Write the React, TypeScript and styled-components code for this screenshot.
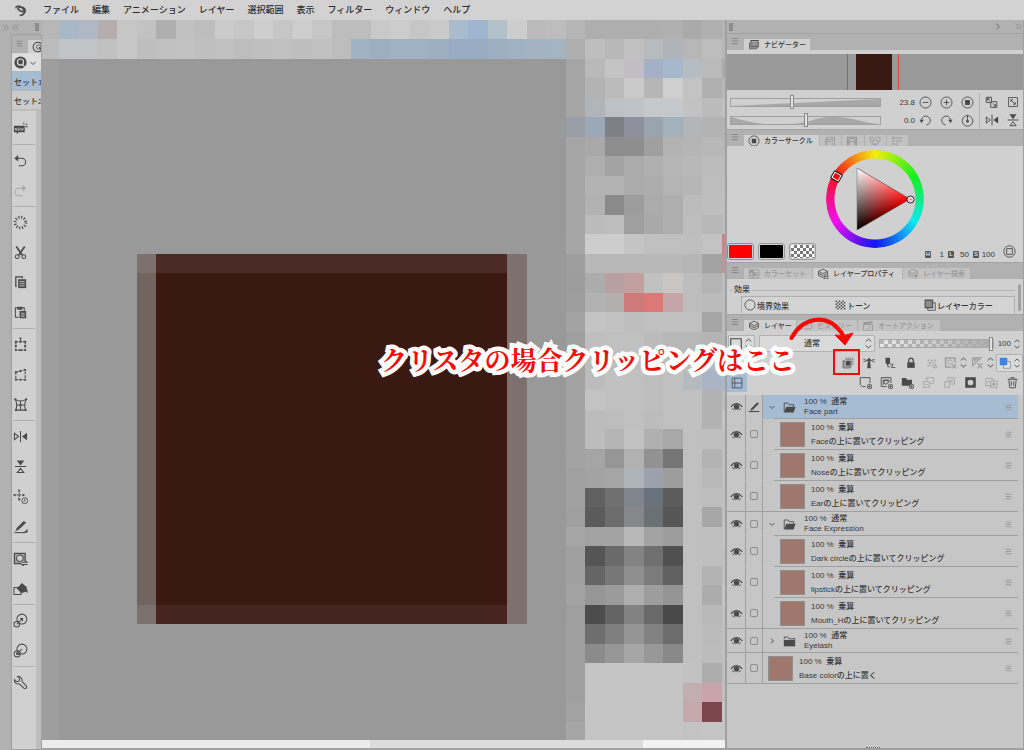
import React from "react";
import styled, { createGlobalStyle, css } from "styled-components";

const c = {
  bar: "#b1b1b1",
  panel: "#d0d0d0",
  list: "#c6c6c6",
  line: "#a0a0a0",
  soft: "#bababa",
  ink: "#383838",
  faint: "#989898",
  blue: "#a6bcd3",
  red: "#f40b06",
};

const Global = createGlobalStyle`
  *, *::before, *::after { box-sizing: border-box; }
  body { margin: 0; background: ${c.bar}; }
  body, button, input, select {
    font-family: "Liberation Sans", "Noto Sans CJK JP", sans-serif;
    font-size: 8px;
    font-weight: 500;
    color: ${c.ink};
  }
  button { padding: 0; border: 0; background: none; }
  ul, fieldset, legend { margin: 0; padding: 0; border: 0; list-style: none; }
  svg { display: block; flex: none; }
`;

/* ---------- icons ---------- */

const Svg = styled.svg<{ $size: number; $color?: string }>`
  width: ${(p) => p.$size}px;
  height: ${(p) => p.$size}px;
  color: ${(p) => p.$color || "#4a4a4a"};
  fill: none;
  stroke: currentColor;
  stroke-width: 1.1;
`;

const F = { fill: "currentColor", stroke: "none" };

const stackLayers = (
  <>
    <path d="M8 1.5 14 4.500 8 7.500 2 4.500Z" />
    <path d="M2 7.200 8 10.200 14 7.200M2 9.900 8 12.900 14 9.900M2 4.500V9.900M14 4.500V9.900" />
  </>
);

const glyphs: Record<string, React.ReactNode> = {
  menu: <path d="M3 4H13M3 8H13M3 12H13" strokeWidth="1.600" />,
  downSmall: <path d="M3 6 8 11 13 6" strokeWidth="1.8" />,
  rightSmall: <path d="M6 3 11 8 6 13" strokeWidth="1.8" />,
  right2: <path d="M3 3 8 8 3 13M8 3 13 8 8 13" />,
  left2: <path d="M8 3 3 8 8 13M13 3 8 8 13 13" />,
  updown: <path d="M4 5 8 1.500 12 5M4 11 8 14.500 12 11" strokeWidth="1.4" />,
  brand: (
    <path d="M2.500 5.500C2 2 6 2 8.500 3.500 11 5 12.500 6.500 12 8.500 11.500 10.500 8 9 5.500 7 4 5.500 6 3.500 9 3.800 13 4.200 14.500 7 13.500 9.500 12.500 12.500 10 14 7 14" strokeWidth="1.9" />
  ),
  quick: (
    <>
      <circle cx="8" cy="8" r="7.500" {...F} />
      <circle cx="8" cy="7.500" r="3.800" stroke="#dedede" strokeWidth="1.5" />
      <path d="M10.500 10.500 13 13" stroke="#dedede" strokeWidth="1.5" />
    </>
  ),
  newTag: (
    <>
      <path d="M1 5H12.500V12H6L4 14V12H1Z" {...F} />
      <path d="M2.500 10V7.500L4 10V7.500M5.500 7.500V10H7M5.500 7.500H7M5.500 8.800H7M8 7.500 8.700 10 9.500 8 10.200 10 11 7.500" stroke="#d0d0d0" strokeWidth=".7" />
      <path d="M11.500 3.500V1.500M13.500 4 15 3M13.500 6H15.500" />
    </>
  ),
  undo: (
    <>
      <path d="M2 5.500H9.500A4 4 0 0 1 9.500 13.500H6" />
      <path d="M5.500 2V9L1.500 5.500Z" {...F} />
    </>
  ),
  redo: (
    <>
      <path d="M13 5.500H6A4 4 0 0 0 6 13.500H10" />
      <path d="M10 2V9L14 5.500Z" {...F} />
    </>
  ),
  dots: <circle cx="8" cy="8" r="5.700" strokeWidth="3" strokeDasharray="1.2 1.784" />,
  cut: (
    <>
      <path d="M3.500 1.500 10 11M12.500 1.500 6 11" strokeWidth="1.8" />
      <circle cx="4.500" cy="12.500" r="2" />
      <circle cx="11.500" cy="12.500" r="2" />
    </>
  ),
  copy: (
    <>
      <path d="M4 12H3V2H10V3.500" strokeWidth="1.4" />
      <path d="M5.500 4.500H14V14H5.500Z" {...F} />
      <path d="M7 7H12.500M7 9.300H12.500M7 11.600H12.500" stroke={c.panel} strokeWidth=".9" />
    </>
  ),
  paste: (
    <>
      <path d="M6 13H2.500V3H12V6" />
      <path d="M4.500 1.800H10V5H4.500ZM7 6.500H14V14H7Z" {...F} />
      <path d="M8.500 8.800H12.500M8.500 10.500H12.500M8.500 12.200H12.500" stroke={c.panel} strokeWidth=".8" />
    </>
  ),
  scale: (
    <>
      <path d="M3 5H13V14H3ZM8 5V1.500" strokeDasharray="2.500 1" />
      <path d="M2 4H4V6H2ZM12 4H14V6H12ZM2 13H4V15H2ZM12 13H14V15H12ZM7 4H9V6H7ZM7 13H9V15H7ZM7 .5H9V2.500H7ZM2 8.500H4V10.500H2ZM12 8.500H14V10.500H12Z" {...F} />
    </>
  ),
  skew: (
    <>
      <path d="M3 5.500 13 3V13.500H3Z" strokeDasharray="3 1" />
      <path d="M2 4.500H4V6.500H2ZM12 2H14V4H12ZM2 12.500H4V14.500H2ZM12 12.500H14V14.500H12ZM7 3.300H9V5.300H7ZM7 12.500H9V14.500H7Z" {...F} />
    </>
  ),
  mesh: (
    <>
      <path d="M2.500 2.500Q8 6 14 2.500Q11.500 8 13.500 14H3Q5 8 2.500 2.500ZM4 8.500H12.500M8 4.500V14" />
      <path d="M1.500 1.500H3.500V3.500H1.500ZM13 1.500H15V3.500H13ZM2 13H4V15H2ZM12.500 13H14.500V15H12.500ZM7 7.500H9V9.500H7Z" {...F} />
    </>
  ),
  flipH: (
    <>
      <path d="M8 2V14M1.500 4.500 6 8 1.500 11.500Z" />
      <path d="M15 4V12L9.500 8Z" {...F} />
    </>
  ),
  flipV: (
    <>
      <path d="M2 8H14M4.500 14.500 8 10 11.500 14.500Z" />
      <path d="M4 1.500H12L8 7Z" {...F} />
    </>
  ),
  move: (
    <>
      <path d="M6.500 1V12M1 6.500H12" strokeDasharray="2 .8" />
      <path d="M5 2.500 6.500 0 8 2.500ZM5 10.500 6.500 13 8 10.500ZM2.500 5 0 6.500 2.500 8ZM10.500 5 13 6.500 10.500 8Z" {...F} />
      <circle cx="12.500" cy="12.500" r="3.200" fill={c.panel} strokeWidth=".9" />
      <path d="M12.500 10.500V13H11" strokeWidth=".9" />
    </>
  ),
  pencil: (
    <>
      <path d="M1.500 14.500H14" />
      <path d="M11.500 2 14 4 6 11.500 2.500 13 4 9.500Z" {...F} />
      <path d="M15.500 10.500V14.500H11.500Z" {...F} />
    </>
  ),
  pen: (
    <>
      <path d="M1 14H15" strokeWidth="1.500" />
      <path d="M12.500 1.500 14.500 3.500 6.500 11.500 3 13 4.500 9.500Z" {...F} />
    </>
  ),
  maskTool: (
    <>
      <path d="M1.500 2.500H13V13.500H1.500Z" fill="#a4a4a4" strokeWidth="1.300" />
      <circle cx="7.300" cy="7.800" r="3.500" fill={c.panel} />
      <path d="M9 11H16V16H9Z" fill={c.panel} stroke="none" />
      <path d="M9 12H15L13 10.500M15.500 14.500H9.500L11.500 16" />
    </>
  ),
  bucket: (
    <>
      <path d="M5.500 7H1V14.500H8.500V12" />
      <path d="M9.500 2 15 7 13.500 11.500 9 13 4 8ZM11 8.500 15.500 9V13Z" {...F} />
    </>
  ),
  ringA: (
    <>
      <circle cx="9.500" cy="6.500" r="5.300" />
      <circle cx="4" cy="12" r="3" />
      <path d="M4 12 9.500 6.500" />
      <path d="M10.700 5.300V9L7 5.300Z" {...F} />
    </>
  ),
  ringB: (
    <>
      <circle cx="9.500" cy="6.500" r="5.300" />
      <circle cx="4.500" cy="11.500" r="3.300" />
      <path d="M4 12 9.500 6.500" />
      <path d="M3.500 12.700V9L7.500 12.700Z" {...F} />
    </>
  ),
  wrench: (
    <path d="M4.800 1.500A4.200 4.200 0 0 1 9.500 6.800L14.300 11.800A1.800 1.800 0 0 1 11.800 14.300L6.800 9.500A4.200 4.200 0 0 1 1.500 4.800L4 7.200 6.400 6.400 7.200 4Z" />
  ),
  cards: (
    <>
      <path d="M4 2H13.500V10.500H4Z" strokeWidth="1.400" />
      <path d="M5.500 4H12V8.500H5.500Z" fill="#a0a0a0" strokeWidth=".6" />
      <path d="M3 4.500 2 5.500V13H11.500L12.500 12" />
    </>
  ),
  target: (
    <>
      <circle cx="8" cy="8" r="6.800" />
      <path d="M5 5H11V11H5Z" {...F} />
    </>
  ),
  quickTab: (
    <>
      <path d="M13 4.500A6.300 6.300 0 1 0 13 11.500" strokeWidth="1.400" />
      <circle cx="9" cy="8" r="3" />
      <path d="M9 8 13 12" strokeWidth="1.400" />
    </>
  ),
  ringSquare: (
    <>
      <circle cx="8" cy="8" r="7" />
      <path d="M4.500 4.500H11.500V11.500H4.500Z" />
    </>
  ),
  minus: (<><circle cx="8" cy="8" r="6.800" /><path d="M4.500 8H11.500" /></>),
  plus: (<><circle cx="8" cy="8" r="6.800" /><path d="M4.500 8H11.500M8 4.500V11.500" /></>),
  rotL: (
    <>
      <path d="M3 9A5.500 5.500 0 1 1 9 13.500" />
      <path d="M.8 7H6L3 11.500Z" {...F} />
    </>
  ),
  rotR: (
    <>
      <path d="M13 9A5.500 5.500 0 1 0 7 13.500" />
      <path d="M15.200 7H10L13 11.500Z" {...F} />
    </>
  ),
  rotReset: (
    <>
      <circle cx="8" cy="8.500" r="6.500" />
      <path d="M8 1V9" />
      <circle cx="8" cy="9" r="1.700" {...F} />
    </>
  ),
  fitBoth: (
    <>
      <path d="M1.500 1.500H8V8H1.500ZM8 7H14.500V14H7V8" />
      <path d="M3 3 6.500 6.500M9.500 9 13 12.500M3 5.500V3H5.500M13 10V12.500H10.500" />
    </>
  ),
  fit: (<><path d="M2 2H14V14H2Z" /><path d="M5 5 11 11M5 8V5H8M11 8V11H8" /></>),
  approx: <path d="M4 14V3H14V14M2 14V6H11V14M4 9H9M2 6 4 3M11 6 14 3" />,
  film: <path d="M2 3H14V14M2 3V14M4 5V14M12 5V14M4 5H12M4 9H12M2 7H4M2 11H4M12 7H14M12 11H14" strokeWidth="1.500" />,
  pair: <path d="M1.500 3H6.500V8H1.500ZM9.500 3H14.500V8H9.500ZM4 8V12H12V8M7 12 8 14 9 12" />,
  sliders: <path d="M1 4H15M1 8H5M7 8H15M1 12H6M3 2V6M8 10V14" strokeWidth="1.400" />,
  table: (
    <>
      <path d="M2 2.500H14.500V13.500H2ZM2 6.500H14.500M7 2.500V13.500M2 10H14.500" />
      <path d="M2 2.500H7V6.500H2ZM7 6.500H11V10H7Z" {...F} />
    </>
  ),
  layers: stackLayers,
  layerProp: (<>{stackLayers}<path d="M8.500 9.500H12V12.500H8.500ZM12.500 9.500H15.500V12.500H12.500ZM8.500 13H12V16H8.500ZM12.500 13H15.500V16H12.500Z" fill="#555" stroke={c.panel} strokeWidth=".6" /></>),
  layerFind: (<>{stackLayers}<path d="M8 8H16V16H8Z" fill="#c0c0c0" stroke="none" /><path d="M8 9H15.500L12.500 12V14.500L11 13.500V12Z" {...F} /></>),
  history: <path d="M1 12V4H10.500A4 4 0 0 1 10.500 12H4.500M4.500 7.500H10.500" />,
  clapper: (
    <>
      <path d="M2 6H14V14.500H2Z" />
      <path d="M2 6 1.500 3 14 1.500V4Z" {...F} />
      <path d="M6 14 12 7.500" />
    </>
  ),
  circle: <circle cx="8" cy="8" r="6.800" />,
  tone: <path d="M3 2V14M7.500 2V14M12 2V14M5.200 4V16M9.800 4V16M14.200 4V16" strokeWidth="1.900" strokeDasharray="2 2" />,
  layerColor: (
    <>
      <path d="M5 5H15V15H5Z" />
      <path d="M1.500 1.500H11.500V11.500H1.500Z" fill="#8c8c8c" strokeWidth="1.400" />
    </>
  ),
  clip: (
    <>
      <path d="M5 1.500H14.500V11" strokeDasharray="1.500 1.200" />
      <path d="M5 5H11.500V11.500H5Z" {...F} />
      <path d="M4.500 3.500H12.500V12.500H3.500V4" strokeWidth=".7" />
      <path d="M3 5H1.500V14.500H11V13" />
    </>
  ),
  lighthouse: (
    <>
      <path d="M6.500 6H9.500L10.500 15H5.500ZM5.500 3.500 8 1 10.500 3.500V5.500H5.500Z" {...F} />
      <path d="M5 4.500 .5 3M5 5 .5 6.500M11 4.500 15.500 3M11 5 15.500 6.500" />
    </>
  ),
  draft: (
    <>
      <path d="M2 1H8V8L5 11 2 8Z" {...F} />
      <path d="M5 10V13H8M8 8 10 11 12 9 10 14H15" />
    </>
  ),
  lock: (
    <>
      <path d="M3 7H13V14.500H3Z" {...F} />
      <path d="M5 7V4.500A3 3 0 0 1 11 4.500V7" strokeWidth="1.700" />
    </>
  ),
  alphaLock: <path d="M2 4.500H14M4 8H10M2 11.500H8M9 13H15M12 9V15" strokeWidth="2.400" strokeDasharray="2.500 2" />,
  maskOff: (
    <>
      <path d="M9 13.500H2V2.500H13.500V8" strokeWidth="2" />
      <circle cx="7.500" cy="7.500" r="2.700" />
      <path d="M10 10 15 15M15 10 10 15" strokeWidth="1.600" />
    </>
  ),
  rulerOff: (
    <>
      <path d="M2 12V2.500H12ZM4.500 7.500V4.500H8" strokeWidth="1.700" />
      <path d="M8 9 14 15M14 9 8 15" strokeWidth="1.600" />
    </>
  ),
  colorPair: (
    <>
      <path d="M6 6H15V15H6Z" fill="#e8e8e8" stroke="#888" />
      <path d="M1 1H11V11H1Z" fill="#3f84e0" stroke="none" />
    </>
  ),
  twoPane: <path d="M1.500 1.500H14.500V14.500H1.500ZM1.500 8H14.500M5 1.500V14.500" />,
  frame: <path d="M2 2H14V14H2Z" strokeWidth="1.300" />,
  newLayer: (
    <>
      <path d="M8 13H4L1.500 10.500V2H13.500V8.500" />
      <circle cx="13" cy="13" r="2.800" /><path d="M11.500 13H14.500M13 11.500V14.500" />
    </>
  ),
  newVector: (
    <>
      <path d="M8 13H1.500V2H13.500V8.500M4 11V5M11 8V5H4" />
      <circle cx="7.500" cy="7.500" r="2.500" />
      <circle cx="13" cy="13" r="2.800" /><path d="M11.500 13H14.500M13 11.500V14.500" />
    </>
  ),
  newFolder: (
    <>
      <path d="M1 2.500H6L7.500 4.500H13.500V12H1Z" {...F} />
      <circle cx="13" cy="13" r="2.800" fill={c.panel} /><path d="M11.500 13H14.500M13 11.500V14.500" />
    </>
  ),
  transfer: <path d="M6 2H14V9H10M6 2V6M2 7H9V14H2ZM4 10.500H7" />,
  merge: <path d="M6 2H14V10H10M6 2V6M2 7H8V14H2ZM9 7 12 4.500M9 4.500V7H12" />,
  mask: (
    <>
      <path d="M1.500 1.500H14.500V14.500H1.500Z" {...F} />
      <circle cx="8" cy="8" r="3.500" fill={c.panel} stroke="none" />
    </>
  ),
  applyMask: (
    <>
      <path d="M8 12H1V3H10V5M7 6H15V14H7ZM2.500 7.500H6" />
      <circle cx="11" cy="10" r="2" {...F} />
    </>
  ),
  trash: <path d="M2 4H14M6 4V2H10V4M3.500 4 4.500 14.500H11.500L12.500 4M6.500 6.500V12M9.500 6.500V12" />,
  eye: (
    <>
      <path d="M1 8.500Q8 .5 15 8.500" strokeWidth="1.500" />
      <path d="M2.500 10.500Q4 12 5.500 12.200M13.500 10.500Q12 12 10.500 12.200" />
      <circle cx="8" cy="8.500" r="3.300" {...F} />
    </>
  ),
  folderOpen: (
    <>
      <path d="M1.500 13.500V2.500H6L7.500 4.500H13V7" />
      <path d="M4 7H15.500L13 14H1.500Z" {...F} />
    </>
  ),
  folder: (
    <>
      <path d="M1 6H15V14H1Z" {...F} />
      <path d="M1.500 5V2.500H6L7.500 4.500H14.500V6" />
    </>
  ),
};

const Icon = ({ name, size = 13, color }: { name: string; size?: number; color?: string }) => (
  <Svg viewBox="0 0 16 16" $size={size} $color={color} aria-hidden="true">{glyphs[name]}</Svg>
);

/* ---------- shell ---------- */

const App_ = styled.div`
  display: grid;
  grid-template-rows: 20px minmax(0, 1fr);
  height: 100vh;
  min-height: 700px;
  overflow: hidden;
`;
const MenuBar = styled.nav`
  display: flex;
  align-items: center;
  gap: 13px;
  padding-left: 14px;
  background: #d2d2d2;
`;
const MenuItem = styled.button`
  font-size: 9px;
  line-height: 20px;
  color: #2c2c2c;
  white-space: nowrap;
  svg { margin-right: 3px; }
`;
const Work = styled.div`
  display: grid;
  grid-template-columns: 42px minmax(0, 1fr) 299px;
`;

/* ---------- left tool column ---------- */

const ToolColumn = styled.aside`
  display: flex;
  flex-direction: column;
  overflow: hidden;
  background: ${c.bar};
`;
const ToolDock = styled.div`
  display: flex;
  align-items: center;
  gap: 1px;
  height: 14px;
  padding-left: 1px;
`;
const DockHandle = styled.span`
  width: 4px;
  height: 8px;
  margin-left: 14px;
  background: #8e8e8e;
`;
const ToolBody = styled.div`
  flex: 1;
  display: flex;
  flex-direction: column;
  margin-left: 11px;
  border: 1px solid ${c.line};
  background: #bdbdbd;
  overflow: hidden;
`;
const ToolTabs = styled.div`
  display: flex;
  align-items: flex-end;
  justify-content: space-between;
  height: 18px;
  padding-left: 3px;
  background: ${c.bar};
  & > svg { margin-bottom: 5px; }
`;
const ToolTab = styled.span`
  width: 13px;
  height: 13px;
  padding: 1px 0 0 4px;
  overflow: hidden;
  background: ${c.panel};
`;
const QuickRow = styled.button`
  display: flex;
  align-items: center;
  gap: 2px;
  height: 18px;
  padding-left: 2px;
  border-top: 1px solid #d8d8d8;
  background: #dedede;
`;
const SetButton = styled.button<{ $on?: boolean }>`
  height: 19px;
  padding-left: 2px;
  border-top: 1px solid #b4b4b4;
  background: ${(p) => (p.$on ? c.blue : "#cbcbcb")};
  text-align: left;
  white-space: nowrap;
  overflow: hidden;
`;
const ToolList = styled.div`
  flex: 1;
  width: 24px;
  margin-top: 2px;
  padding-top: 2px;
  background: ${c.panel};
`;
const ToolGroup = styled.div`
  display: flex;
  flex-direction: column;
  & + & { margin: 1px 1px 0; border-top: 1px solid #b0b0b0; }
  & + & button { margin-left: -1px; }
`;
const ToolButton = styled.button`
  display: flex;
  align-items: center;
  height: 30px;
  padding-left: 1px;
`;

const toolGroups = [
  ["newTag"], ["undo", "redo"], ["dots", "cut", "copy", "paste"],
  ["scale", "skew", "mesh"], ["flipH", "flipV", "move", "pencil"],
  ["maskTool", "bucket"], ["ringA", "ringB"], ["wrench"],
];

const Tools = () => (
  <ToolColumn>
    <ToolDock>
      <Icon name="right2" size={9} color="#7c7c7c" />
      <Icon name="left2" size={9} color="#7c7c7c" />
      <DockHandle />
    </ToolDock>
    <ToolBody>
      <ToolTabs>
        <Icon name="menu" size={9} color="#888" />
        <ToolTab><Icon name="quickTab" size={12} /></ToolTab>
      </ToolTabs>
      <QuickRow aria-label="クイックアクセス">
        <Icon name="quick" size={13} />
        <Icon name="downSmall" size={8} />
      </QuickRow>
      <SetButton $on>セット1</SetButton>
      <SetButton>セット2</SetButton>
      <ToolList>
        {toolGroups.map((g) => (
          <ToolGroup key={g[0]}>
            {g.map((n) => (
              <ToolButton key={n} aria-label={n}>
                <Icon name={n} size={15} color={n === "redo" ? "#a6a6a6" : undefined} />
              </ToolButton>
            ))}
          </ToolGroup>
        ))}
      </ToolList>
    </ToolBody>
  </ToolColumn>
);

/* ---------- canvas ---------- */

const CanvasArea = styled.main`
  display: grid;
  grid-template-rows: minmax(0, 1fr) 10px;
  min-width: 0;
`;
const Picture = styled.svg`
  width: 100%;
  height: 100%;
  background: #c1c1c1;
  shape-rendering: crispEdges;
`;
const ScrollTrack = styled.div`
  display: grid;
  grid-template-columns: 48% 40% 12%;
  border-bottom: 2px solid #a2a2a2;
  background: #dcdcdc;
`;
const ScrollPart = styled.span<{ $tone: string }>`
  background: ${(p) => p.$tone};
`;

const CELL = 19.5;
/* Each row: grid row, first column, then cell tones (two digits = grey). */
const mosaic: [number, number, string][] = [
  [1, 2, "b7 a7b9c7 b0b8c6 b5adae c6 c2 af c1 bd cb c6 ce c6 ce c6 bd bd c9 cc c6 c9 a9bccd a0b5d0 b2c0ca cd bb bd b6 ae ae ae ae b0 aa b0 b4"],
  [2, 2, "bc c0c4c6 c1c4c6 c1 c6 be c0 c2 bf c0 bd bf c0 be c1 bd a1b2c3 9caebf a0b1c1 a0b1c1 9dafc1 98acc2 98acc2 9dafc0 a0b1c1 a5b3c0 a5b4c1 ae be b8 c0 b8bbbe b0b4b9 b7 bd b8"],
  [3, 29, "a5 b9 c4 c0bdc4 a5b0c4 a6b8cc b5bcc2 ba aa"],
  [4, 29, "a5 b3 bb c9 b6 cf c3 b0 b8"],
  [5, 29, "a5 b0b5b9 bdc0c4 bfc2c6 c5c9cc c5c9cc c2 bb c0"],
  [6, 29, "9a9ea6 9aa8b8 7d8185 8e919b 9aa4ae a3b1bd b2b6b8 b3 b3"],
  [7, 29, "a5 a8 8d 8e a0 b3 b5 b8 b6"],
  [8, 29, "a5 ae a3 ab b0 b6 b8 bc bc"],
  [9, 29, "a5 b3 b3 ab ad b4 b6 bd be"],
  [10, 29, "a5 b2 8a 9d ab ae bc be bf"],
  [11, 29, "a5 bb bd 9f a9 ae bd b7 be"],
  [12, 29, "a6 cd cd c4 c0 c0 bf c3 c8878c"],
  [13, 29, "9e b8 b8 b8 b8 b8 b6 a3 b8989c"],
  [14, 29, "9d ac b8a0a0 c2a0a0 c1 c9c5c3 bd b4 bd"],
  [15, 29, "9e b2 b2b0ae ce7a7a dc7878 c4a6a8 bd bb be"],
  [16, 29, "a3 c4 c2 be c0 c0 c0 a6 ba"],
  [17, 29, "9f bf c0 c0 bb b7 b7 b4 b8"],
  [18, 29, "a2 bc bd bf bc bc bc b0b8c2 b0b8c2"],
  [19, 29, "a2 bc c1 c0 bd c0 b5babe a9b5c5 acb8c6"],
  [20, 29, "a2 c3 c0 c0 be c0 c0 b2 bc"],
  [21, 29, "a2 bc bd c0 bc c0 c0 b2 c4"],
  [22, 29, "a2 bc b5 c2 b0 a8 c0 bf bf"],
  [23, 29, "a3 a5 96 b2 92 75 c0 b3 c0"],
  [24, 29, "a1 a3 a5 aeb4b9 9ca2ab 9d c0 b9 c0"],
  [25, 29, "a1 61 70 81868e 6a737c 5c c0 bd c0"],
  [26, 29, "9f 5b 6c 85878a 6b7074 56 c0 a7 c0"],
  [27, 29, "a6 a2 a3 b8 a3 9c c0 bf c4"],
  [28, 29, "a0 55 6a 83 70 50 c0 bf c0"],
  [29, 29, "a0 65 77 8f 7b 60 c0 b3 c0"],
  [30, 29, "a3 96 9b ae 9d 95 c0 ac c4"],
  [31, 29, "9f 4c 64 82 69 49 c0 b9 c0"],
  [32, 29, "a0 6e 7f 95 81 6c c0 bb c0"],
  [33, 29, "a0 8b 97 a6 98 89 c0 bc c0"],
  [34, 29, "a0 c5 c5 c5 c5 c5 c2 ad c0"],
  [35, 29, "a0 c5 c5 c5 c5 c5 c2adb1 c9a5ab bf"],
  [36, 29, "a2 c5 c5 c5 c5 c5 c4a9ad 7c484d c5"],
  [37, 29, "a6 c5 c5 c5 c5 c5 c3 c5 c5"],
];
const tone = (t: string) => "#" + (t.length === 2 ? t + t + t : t);

const Canvas = () => (
  <CanvasArea>
    <Picture role="img" aria-label="キャンバス">
      <g transform={`translate(-42 -20) scale(${CELL})`}>
        <rect x="2" y="3" width="1" height="60" fill="#9e9e9e" />
        <rect x="3" y="3" width="26" height="60" fill="#999" />
        {mosaic.map(([row, col, cells]) =>
          cells.split(" ").map((t, i) => (
            <rect key={`${row}-${i}`} x={col + i} y={row} width="1" height="1" fill={tone(t)} />
          ))
        )}
        <rect x="7" y="13" width="20" height="19" fill="#7c716e" />
        <rect x="7" y="14" width="1" height="17" fill="#72645f" />
        <rect x="8" y="13" width="18" height="19" fill="#46241f" />
        <rect x="8" y="13" width="18" height="1" fill="#492a25" />
        <rect x="8" y="14" width="18" height="17" fill="#3b1913" />
      </g>
    </Picture>
    <ScrollTrack>
      <ScrollPart $tone="#ececec" />
      <ScrollPart $tone="#dcdcdc" />
      <ScrollPart $tone="#f2f2f2" />
    </ScrollTrack>
  </CanvasArea>
);

/* ---------- right dock ---------- */

const Dock = styled.aside`
  display: flex;
  flex-direction: column;
  border: solid ${c.line};
  border-width: 0 1px 2px 2px;
  background: ${c.bar};
  min-height: 0;
`;
const DockBar = styled.div`
  display: flex;
  align-items: center;
  height: 13px;
  padding: 0 0 0 2px;
  gap: 12px;
`;
const DockGrip = styled.span`
  width: 4px;
  height: 8px;
  margin-right: auto;
  background: #8e8e8e;
`;
const TabBar = styled.div`
  display: flex;
  align-items: flex-end;
  height: 17px;
  padding-left: 3px;
  border-top: 1px solid #a4a4a4;
  background: ${c.bar};
  & > svg { margin: 0 4px 4px 0; }
`;
const Tab = styled.button<{ $on?: boolean; $w?: number }>`
  display: flex;
  align-items: center;
  justify-content: flex-start;
  gap: 4px;
  height: 11px;
  width: ${(p) => (p.$w ? p.$w + "px" : "auto")};
  padding: 0 3px 0 4px;
  border-right: 1px solid ${c.bar};
  background: ${(p) => (p.$on ? c.panel : "#c2c2c2")};
  color: ${(p) => (p.$on ? c.ink : c.faint)};
  font-size: 7px;
  line-height: 11px;
  white-space: nowrap;
`;

type TabSpec = { icon: string; label?: string; on?: boolean; w?: number };
const Tabs = ({ items }: { items: TabSpec[] }) => (
  <TabBar>
    <Icon name="menu" size={10} color="#888" />
    {items.map((t) => (
      <Tab key={t.icon} $on={t.on} $w={t.w} aria-label={t.label || t.icon}>
        <Icon name={t.icon} size={12} color={t.on ? undefined : c.faint} />
        {t.label}
      </Tab>
    ))}
  </TabBar>
);

/* navigator */
const NavBody = styled.section`
  padding-top: 4px;
  background: ${c.panel};
`;
const Preview = styled.div`
  display: flex;
  justify-content: center;
  height: 36px;
  padding-right: 4px;
  background: #999;
`;
const ViewFrame = styled.div`
  display: flex;
  justify-content: center;
  width: 52px;
  padding-left: 2px;
  border: solid #d8453f;
  border-width: 0 1px;
`;
const ViewArt = styled.div`
  width: 36px;
  background: #3b1913;
`;
const NavControls = styled.div`
  padding: 3px 0 0 3px;
  height: 39px;
`;
const NavRow = styled.div`
  display: grid;
  grid-template-columns: minmax(0, 1fr) 34px repeat(3, 21px) 3px repeat(2, 21px);
  align-items: center;
  height: 18px;
`;
const NavValue = styled.output`
  text-align: right;
`;
const IconButton = styled.button<{ $w?: number }>`
  display: flex;
  align-items: center;
  justify-content: center;
  width: ${(p) => p.$w || 21}px;
  height: 18px;
`;
const Rule = styled.span`
  width: 1px;
  height: 18px;
  margin-left: 1px;
  background: #b4b4b4;
`;
const SliderBox = styled.div`
  display: grid;
  align-items: center;
  & > * { grid-area: 1 / 1; }
`;
const Curve = styled.svg`
  width: 100%;
  height: 9px;
  border: 1px solid ${c.line};
  fill: #a8a8a8;
`;
const Range = styled.input`
  appearance: none;
  width: 100%;
  height: 14px;
  margin: 0;
  background: transparent;
  &::-webkit-slider-thumb {
    appearance: none;
    width: 4px;
    height: 14px;
    border: 1px solid #8a8a8a;
    background: #e2e2e2;
  }
`;

const NavSlider = ({ label, value, path }: { label: string; value: number; path: string }) => (
  <SliderBox>
    <Curve viewBox="0 0 150 9" preserveAspectRatio="none"><path d={path} /></Curve>
    <Range type="range" aria-label={label} defaultValue={value} />
  </SliderBox>
);

const Navigator = () => (
  <>
    <Tabs items={[{ icon: "cards", label: "ナビゲーター", on: true, w: 67 }]} />
    <NavBody>
      <Preview><ViewFrame><ViewArt /></ViewFrame></Preview>
      <NavControls>
        <NavRow>
          <NavSlider label="拡大率" value={41} path="M0 9 150 0V9Z" />
          <NavValue>23.8</NavValue>
          <IconButton aria-label="縮小"><Icon name="minus" /></IconButton>
          <IconButton aria-label="拡大"><Icon name="plus" /></IconButton>
          <IconButton aria-label="100%"><Icon name="target" /></IconButton>
          <Rule />
          <IconButton aria-label="フィッティング"><Icon name="fitBoth" /></IconButton>
          <IconButton aria-label="全体表示"><Icon name="fit" size={12} /></IconButton>
        </NavRow>
        <NavRow>
          <NavSlider label="回転" value={50} path="M0 0C15 5 25 9 38 9H60C80 8 85 0 100 0 125 0 130 7 150 9H0Z" />
          <NavValue>0.0</NavValue>
          <IconButton aria-label="左回転"><Icon name="rotL" /></IconButton>
          <IconButton aria-label="右回転"><Icon name="rotR" /></IconButton>
          <IconButton aria-label="回転をリセット"><Icon name="rotReset" /></IconButton>
          <Rule />
          <IconButton aria-label="左右反転"><Icon name="flipH" size={14} /></IconButton>
          <IconButton aria-label="上下反転"><Icon name="flipV" size={14} /></IconButton>
        </NavRow>
      </NavControls>
    </NavBody>
  </>
);

/* colour circle */
const ColorBody = styled.section`
  display: grid;
  height: 116px;
  padding: 4px 0 2px;
  background: ${c.panel};
  & > * { grid-area: 1 / 1; }
`;
const Wheel = styled.div`
  display: grid;
  place-self: start center;
  width: 98px;
  height: 98px;
  & > * { grid-area: 1 / 1; }
`;
const HueRing = styled.div`
  border-radius: 50%;
  background: conic-gradient(#f4ee0c, #14f01c, #10e8f0, #1414f4, #f010f0, #f41020, #f4ee0c);
  mask: radial-gradient(circle, transparent 40px, #000 41px);
`;
const WheelDrawing = styled.svg`
  width: 98px;
  height: 98px;
  z-index: 1;
  overflow: visible;
`;
const Blend = styled.path`
  mix-blend-mode: plus-lighter;
`;
const TriangleGroup = styled.g`
  isolation: isolate;
`;
const Swatches = styled.div`
  display: flex;
  gap: 4px;
  place-self: end start;
`;
const Swatch = styled.button<{ $fill: string; $on?: boolean }>`
  width: 27px;
  height: 17px;
  padding: 1px;
  border: 1px solid ${(p) => (p.$on ? "#6f8fd0" : "#9a9a9a")};
  border-radius: 3px;
  background: ${(p) => p.$fill} content-box, ${c.panel};
`;
const Readout = styled.div`
  display: flex;
  align-items: flex-end;
  place-self: end end;
  height: 18px;
`;
const Channel = styled.abbr`
  width: 6px;
  height: 7px;
  margin: 0 0 2px 4px;
  border-radius: 1px;
  background: #555;
  color: #ddd;
  font-size: 6px;
  font-weight: 700;
  line-height: 7px;
  text-align: center;
`;
const ChannelValue = styled.output<{ $w: number }>`
  width: ${(p) => p.$w}px;
  line-height: 11px;
  text-align: right;
`;

const ColorCircle = () => (
  <>
    <Tabs
      items={[
        { icon: "target", label: "カラーサークル", on: true, w: 76 },
        { icon: "approx", w: 22 }, { icon: "film", w: 23 }, { icon: "pair", w: 22 }, { icon: "sliders", w: 22 },
      ]}
    />
    <ColorBody>
      <Wheel>
        <HueRing />
        <WheelDrawing viewBox="0 0 98 98" fill="none">
          <defs>
            <linearGradient id="toWhite" gradientUnits="userSpaceOnUse" x1="31" y1="18" x2="57" y2="64">
              <stop stopColor="#fff" /><stop offset="1" stopColor="#000" />
            </linearGradient>
            <linearGradient id="toRed" gradientUnits="userSpaceOnUse" x1="31" y1="0" x2="83" y2="0">
              <stop stopColor="#000" /><stop offset="1" stopColor="#f00" />
            </linearGradient>
          </defs>
          <TriangleGroup>
            <path d="M31 18V80L84 49Z" fill="url(#toWhite)" />
            <Blend d="M31 18V80L84 49Z" fill="url(#toRed)" />
          </TriangleGroup>
          <path d="M31 18V80L84 49Z" stroke="#777" strokeWidth=".6" />
          <circle cx="84.500" cy="49.500" r="3.500" fill="#f8e8e8" stroke="#222" />
          <circle cx="84.500" cy="49.500" r="1" fill="#f44" />
          <g transform="translate(10.500 26.500) rotate(30)">
            <rect x="-5" y="-4.500" width="10" height="9" rx="1" fill="#111" />
            <rect x="-4" y="-3.500" width="8" height="7" fill="#fff" />
            <rect x="-3" y="-2.500" width="6" height="5" fill="#f00" />
          </g>
        </WheelDrawing>
      </Wheel>
      <Swatches>
        <Swatch $fill="linear-gradient(#f00, #f00)" $on aria-label="メインカラー" />
        <Swatch $fill="linear-gradient(#000, #000)" aria-label="サブカラー" />
        <Swatch $fill="repeating-conic-gradient(#777 0 25%, #fff 0 50%) 0 0 / 6px 6px" aria-label="透明色" />
      </Swatches>
      <Readout>
        <Channel>H</Channel><ChannelValue $w={13}>1</ChannelValue>
        <Channel>L</Channel><ChannelValue $w={15}>50</ChannelValue>
        <Channel>S</Channel><ChannelValue $w={16}>100</ChannelValue>
        <IconButton $w={28} aria-label="色空間"><Icon name="ringSquare" /></IconButton>
      </Readout>
    </ColorBody>
  </>
);

/* layer property */
const PropertyBody = styled.section`
  display: flex;
  height: 35px;
  padding: 5px 2px 0 3px;
  background: ${c.panel};
`;
const Effects = styled.fieldset`
  flex: 1;
  min-width: 0;
  padding-left: 11px;
  border-top: 1px solid #b4b4b4;
`;
const EffectsTitle = styled.legend`
  margin-left: -8px;
  padding: 0 1px;
  line-height: 12px;
`;
const EffectRow = styled.div`
  display: grid;
  grid-template-columns: repeat(3, 1fr);
  height: 17px;
  padding-left: 2px;
  border: solid #b0b0b0;
  border-width: 1px 1px 0;
  background: #d4d4d4;
`;
const Effect = styled.button`
  display: flex;
  align-items: center;
  gap: 1px;
  white-space: nowrap;
`;
const ScrollThumb = styled.span`
  width: 3px;
  height: 27px;
  margin-left: 3px;
  border-radius: 2px;
  background: #a2a2a2;
`;

const LayerProperty = () => (
  <>
    <Tabs
      items={[
        { icon: "table", label: "カラーセット", w: 69 },
        { icon: "layerProp", label: "レイヤープロパティ", on: true, w: 90 },
        { icon: "layerFind", label: "レイヤー検索", w: 68 },
      ]}
    />
    <PropertyBody>
      <Effects>
        <EffectsTitle>効果</EffectsTitle>
        <EffectRow>
          <Effect><Icon name="circle" size={12} />境界効果</Effect>
          <Effect><Icon name="tone" size={12} />トーン</Effect>
          <Effect><Icon name="layerColor" size={12} />レイヤーカラー</Effect>
        </EffectRow>
      </Effects>
      <ScrollThumb />
    </PropertyBody>
  </>
);

/* layer palette */
const LayerPanel = styled.section`
  position: relative;
  flex: 1;
  display: flex;
  flex-direction: column;
  min-height: 0;
`;
const LayerControls = styled.div`
  padding-top: 4px;
  height: 64px;
  background: ${c.panel};
`;
const BlendRow = styled.div`
  display: flex;
  align-items: center;
  gap: 4px;
  height: 17px;
  padding: 0 1px;
`;
const field = css`
  border: 1px solid #b2b2b2;
  border-radius: 1px;
  background: #dadada;
`;
const PaletteColor = styled.button`
  ${field}
  display: flex;
  align-items: center;
  justify-content: space-between;
  width: 27px;
  height: 17px;
`;
const BlendBox = styled.div`
  ${field}
  display: flex;
  align-items: center;
  width: 116px;
  height: 17px;
`;
const BlendSelect = styled.select`
  flex: 1;
  appearance: none;
  min-width: 0;
  padding: 0 0 0 44px;
  border: 0;
  background: transparent;
`;
const OpacityTrack = styled.div`
  flex: 1;
  display: flex;
  align-items: center;
  height: 9px;
  border: 1px solid #a8a8a8;
  background:
    linear-gradient(90deg, transparent, #ababab),
    repeating-conic-gradient(#e8e8e8 0 25%, #b4b4b4 0 50%) 0 0 / 8px 8px;
`;
const OpacityValue = styled.label`
  display: flex;
  align-items: center;
  gap: 1px;
`;
const ToolRow = styled.div<{ $h: number }>`
  display: flex;
  align-items: center;
  justify-content: flex-end;
  height: ${(p) => p.$h}px;
`;
const ComboButton = styled.button<{ $boxed?: boolean }>`
  display: flex;
  align-items: center;
  justify-content: space-between;
  width: 27px;
  height: 18px;
  padding: 0 0 0 2px;
  ${(p) => p.$boxed && field}
`;
const PaneToggle = styled.button`
  display: flex;
  align-items: center;
  justify-content: center;
  width: 20px;
  height: 19px;
  margin-right: auto;
  background: ${c.blue};
`;
const ListArea = styled.div`
  flex: 1;
  display: flex;
  flex-direction: column;
  justify-content: space-between;
  padding-right: 5px;
  background: ${c.list};
`;
const Layers = styled.ul`
  display: flex;
  flex-direction: column;
`;
const LayerItem = styled.li<{ $folder?: boolean }>`
  display: grid;
  grid-template-columns: 19px 17px minmax(0, 1fr);
  height: ${(p) => (p.$folder ? 24 : 31)}px;
`;
const Cell = styled.div<{ $line?: boolean }>`
  display: flex;
  align-items: center;
  justify-content: center;
  border-right: 1px solid ${c.line};
  border-bottom: 1px solid ${(p) => (p.$line ? c.line : "transparent")};
`;
const LayerMain = styled.div<{ $on?: boolean; $child?: boolean; $inset?: boolean }>`
  display: flex;
  align-items: center;
  padding: 0 5px 0 ${(p) => (p.$child ? 17 : 5)}px;
  background: ${(p) => (p.$on ? c.blue : "transparent")};
  background-image: linear-gradient(${c.line}, ${c.line});
  background-size: calc(100% - ${(p) => (p.$inset ? 11 : 0)}px) 1px;
  background-position: right bottom;
  background-repeat: no-repeat;
`;
const Thumb = styled.span`
  width: 25px;
  height: 25px;
  margin-right: 6px;
  border: 1px solid #8e8e8e;
  background: #a0776c;
`;
const FolderMarks = styled.span`
  display: flex;
  align-items: center;
  gap: 7px;
  width: 36px;
`;
const Names = styled.div<{ $lh: number }>`
  flex: 1;
  line-height: ${(p) => p.$lh}px;
  white-space: pre;
`;
const Check = styled.input`
  appearance: none;
  width: 8px;
  height: 8px;
  margin: 0;
  border: 1px solid #8c8c8c;
  border-radius: 2px;
`;
const ResizeDots = styled.span`
  align-self: center;
  width: 14px;
  border-bottom: 1px dotted #666;
`;

type Layer = { name: string; mode: string; kind: "open" | "closed" | "child" | "base"; on?: boolean; inset?: boolean };
const layers: Layer[] = [
  { name: "Face part", mode: "通常", kind: "open", on: true, inset: true },
  { name: "Faceの上に置いてクリッピング", mode: "乗算", kind: "child", inset: true },
  { name: "Noseの上に置いてクリッピング", mode: "乗算", kind: "child", inset: true },
  { name: "Earの上に置いてクリッピング", mode: "乗算", kind: "child" },
  { name: "Face Expression", mode: "通常", kind: "open", inset: true },
  { name: "Dark circleの上に置いてクリッピング", mode: "乗算", kind: "child", inset: true },
  { name: "lipstickの上に置いてクリッピング", mode: "乗算", kind: "child", inset: true },
  { name: "Mouth_Hの上に置いてクリッピング", mode: "乗算", kind: "child" },
  { name: "Eyelash", mode: "通常", kind: "closed" },
  { name: "Base colorの上に置く", mode: "乗算", kind: "base" },
];

const LayerRow = ({ layer }: { layer: Layer }) => {
  const folder = layer.kind === "open" || layer.kind === "closed";
  return (
    <LayerItem $folder={folder}>
      <Cell $line={!layer.inset}>
        <button aria-label="表示"><Icon name="eye" size={13} /></button>
      </Cell>
      <Cell $line={!layer.inset}>
        {layer.on ? <Icon name="pen" size={12} /> : <Check type="checkbox" aria-label={layer.name} />}
      </Cell>
      <LayerMain $on={layer.on} $child={layer.kind === "child"} $inset={layer.inset}>
        {folder ? (
          <FolderMarks>
            <Icon name={layer.kind === "open" ? "downSmall" : "rightSmall"} size={8} />
            <Icon name={layer.kind === "open" ? "folderOpen" : "folder"} size={13} />
          </FolderMarks>
        ) : (
          <Thumb />
        )}
        <Names $lh={folder ? 10 : 14}>
          <div>100 %  {layer.mode}</div>
          <div>{layer.name}</div>
        </Names>
        <Icon name="menu" size={9} color="#959595" />
      </LayerMain>
    </LayerItem>
  );
};

/* callout drawn over the palette and canvas */
const CalloutText = styled.p`
  position: absolute;
  top: 30px;
  right: 228px;
  z-index: 2;
  margin: 0;
  font-family: "Noto Serif CJK JP", "Noto Sans CJK JP", serif;
  font-size: 26px;
  font-weight: 700;
  line-height: 30px;
  color: ${c.red};
  white-space: nowrap;
  -webkit-text-stroke: 9px #fff;
  paint-order: stroke fill;
  stroke-linejoin: round;
`;
const CalloutMark = styled.svg`
  position: absolute;
  top: 0;
  right: 162px;
  z-index: 1;
  width: 72px;
  height: 62px;
`;

const LayerPalette = () => (
  <LayerPanel>
    <Tabs
      items={[
        { icon: "layers", label: "レイヤー", on: true, w: 53 },
        { icon: "history", label: "ヒストリー", w: 61 },
        { icon: "clapper", label: "オートアクション", w: 83 },
      ]}
    />
    <LayerControls>
      <BlendRow>
        <PaletteColor aria-label="パレットカラー">
          <Icon name="frame" size={14} /><Icon name="updown" size={11} />
        </PaletteColor>
        <BlendBox>
          <BlendSelect aria-label="合成モード" defaultValue="通常">
            <option>通常</option>
            <option>乗算</option>
          </BlendSelect>
          <Icon name="updown" size={11} />
        </BlendBox>
        <OpacityTrack>
          <Range type="range" aria-label="不透明度" defaultValue={100} />
        </OpacityTrack>
        <OpacityValue>100<Icon name="updown" size={10} /></OpacityValue>
      </BlendRow>
      <ToolRow $h={21}>
        {["clip", "lighthouse", "draft", "lock"].map((n) => (
          <IconButton key={n} aria-label={n}><Icon name={n} size={12} /></IconButton>
        ))}
        <IconButton aria-label="alphaLock"><Icon name="alphaLock" size={12} color="#a6a6a6" /></IconButton>
        <ComboButton aria-label="マスク"><Icon name="maskOff" size={13} color="#a0a0a0" /><Icon name="updown" size={11} /></ComboButton>
        <ComboButton aria-label="定規"><Icon name="rulerOff" size={13} color="#a0a0a0" /><Icon name="updown" size={11} /></ComboButton>
        <ComboButton aria-label="レイヤーカラー" $boxed><Icon name="colorPair" size={12} /><Icon name="updown" size={10} /></ComboButton>
      </ToolRow>
      <ToolRow $h={19}>
        <PaneToggle aria-label="2ペイン"><Icon name="twoPane" size={12} /></PaneToggle>
        {["newLayer", "newVector", "newFolder", "transfer", "merge", "mask", "applyMask", "trash"].map((n) => (
          <IconButton key={n} aria-label={n}>
            <Icon name={n} size={13} color={["transfer", "merge", "applyMask"].includes(n) ? "#a2a2a2" : undefined} />
          </IconButton>
        ))}
      </ToolRow>
    </LayerControls>
    <ListArea>
      <Layers>{layers.map((l) => <LayerRow key={l.name} layer={l} />)}</Layers>
      <ResizeDots />
    </ListArea>
    <CalloutText>クリスタの場合クリッピングはここ</CalloutText>
    <CalloutMark viewBox="0 0 72 62" fill="none" stroke={c.red}>
      <path d="M2.500 24C13 4 37 -2 52 18 53.500 20 54.500 22 55 24" strokeWidth="4" strokeLinecap="round" />
      <path d="M46 21Q55 23 64 19L56 31Z" fill={c.red} />
      <rect x="45" y="36" width="25" height="24" strokeWidth="2" />
    </CalloutMark>
  </LayerPanel>
);

const menus = ["ファイル", "編集", "アニメーション", "レイヤー", "選択範囲", "表示", "フィルター", "ウィンドウ", "ヘルプ"];

export default function App() {
  return (
    <App_>
      <Global />
      <MenuBar>
        <MenuItem aria-label="アプリ"><Icon name="brand" size={13} /></MenuItem>
        {menus.map((m) => <MenuItem key={m}>{m}</MenuItem>)}
      </MenuBar>
      <Work>
        <Tools />
        <Canvas />
        <Dock>
          <DockBar>
            <DockGrip />
            <Icon name="rightSmall" size={9} color="#7c7c7c" />
            <Icon name="right2" size={9} color="#7c7c7c" />
          </DockBar>
          <Navigator />
          <ColorCircle />
          <LayerProperty />
          <LayerPalette />
        </Dock>
      </Work>
    </App_>
  );
}
